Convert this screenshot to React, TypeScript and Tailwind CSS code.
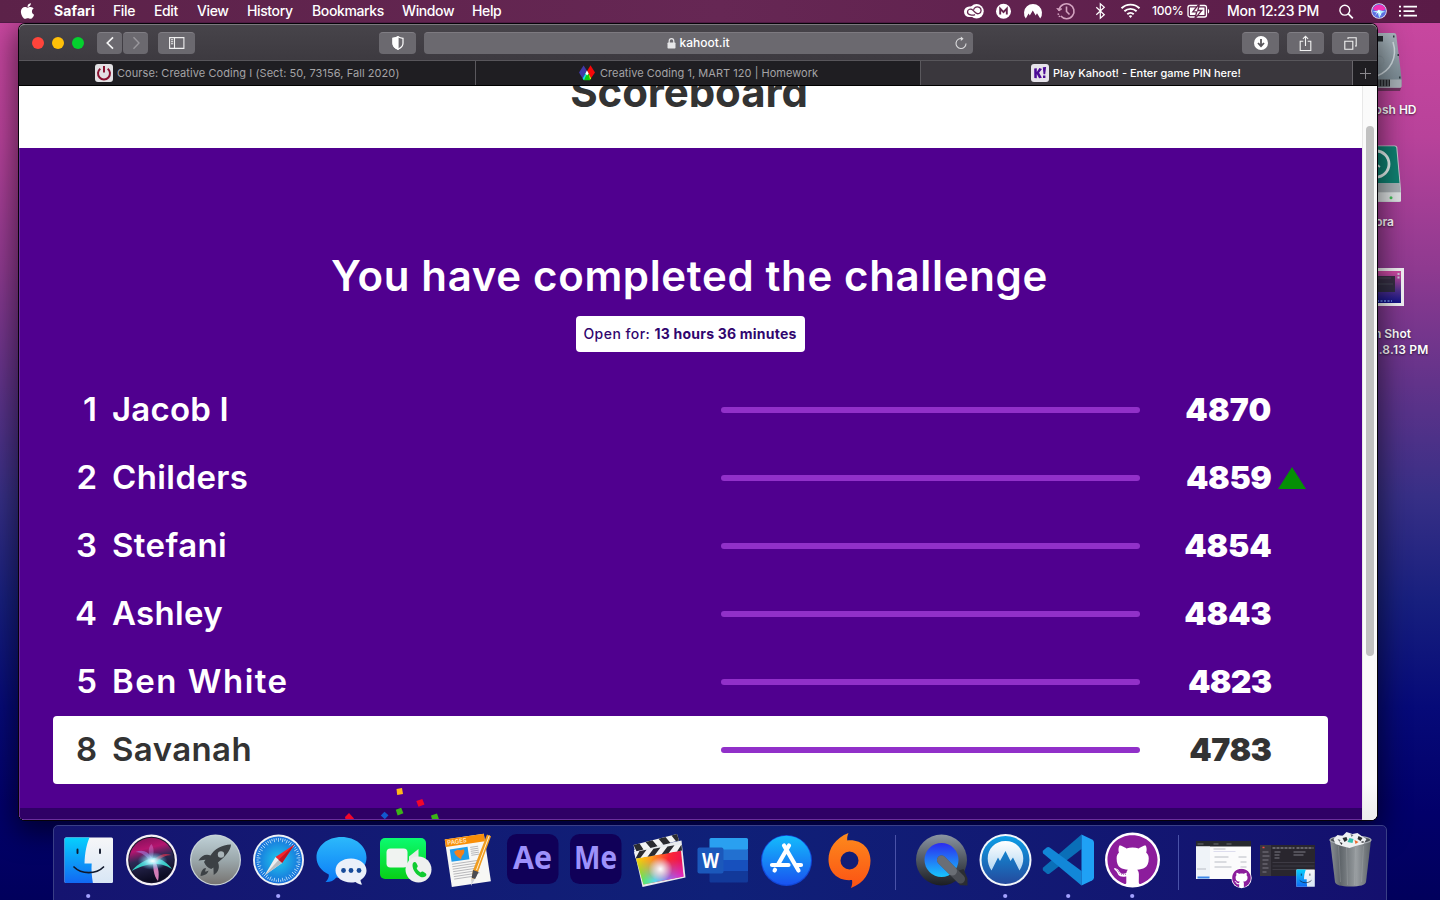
import React from 'react';
import { FaApple, FaGithub, FaBluetoothB } from 'react-icons/fa';

/* ---------- shared glyphs ---------- */

function SiriOrb({ r, id }: { r: number; id: string }) {
  return (
    <g transform={`scale(${r / 25})`}>
      <defs>
        <linearGradient id={`${id}-bg`} x1="0" y1="0" x2="0.25" y2="1">
          <stop offset="0" stopColor="#7a0f55" />
          <stop offset="0.32" stopColor="#b4156f" />
          <stop offset="0.55" stopColor="#2b2a55" />
          <stop offset="1" stopColor="#0c0b22" />
        </linearGradient>
        <radialGradient id={`${id}-glow`}>
          <stop offset="0" stopColor="#fff" />
          <stop offset="0.3" stopColor="#b8f4ff" stopOpacity="0.85" />
          <stop offset="1" stopColor="#4bb8e8" stopOpacity="0" />
        </radialGradient>
      </defs>
      <circle r="25.500" fill="#f4f0f6" />
      <circle r="23.300" fill="#15122b" />
      <circle r="22.300" fill={`url(#${id}-bg)`} />
      <path d="M-20 11C-13 3-5-1 3-2c8 1 13 5 17.500 11C14 5 9 4 4 4c-9 0-16 3-24 7z" fill="#38e0cf" opacity="0.9" />
      <path d="M2-2c4 7 6.500 14 4.500 23C2 16 1 6 2-2z" fill="#f58fd0" opacity="0.85" />
      <path d="M1-2c-5-7-10-9-17-6 6 0 11 4 14 9z" fill="#a77be0" opacity="0.6" />
      <path d="M1-2c2-7 1-11-1-14-4 4-3 9-1 15z" fill="#d79df0" opacity="0.35" />
      <path d="M3-1c6-5 11-6 17-4-6 0-11 3-15 7z" fill="#e0304f" opacity="0.7" />
      <ellipse cx="1" cy="1" rx="15" ry="9" fill={`url(#${id}-glow)`} />
    </g>
  );
}

function FinderFace({ id }: { id: string }) {
  return (
    <g>
      <defs>
        <linearGradient id={`${id}-l`} x1="0" y1="0" x2="0" y2="1">
          <stop offset="0" stopColor="#06d0fd" />
          <stop offset="1" stopColor="#1268f3" />
        </linearGradient>
        <linearGradient id={`${id}-r`} x1="0" y1="0" x2="0" y2="1">
          <stop offset="0" stopColor="#f6f6f8" />
          <stop offset="1" stopColor="#d8e6f5" />
        </linearGradient>
      </defs>
      <rect x="-24" y="-22.500" width="48.500" height="45.500" rx="1.500" fill={`url(#${id}-r)`} />
      <path d="M-22.500-22.500H1C-2-15-3.600-8-4 3.500H3.200c-.5 6 0 12.500 1.200 19.500h-26.900a1.500 1.500 0 0 1-1.500-1.500V-21a1.500 1.500 0 0 1 1.500-1.500z" fill={`url(#${id}-l)`} />
      <g stroke="#10182c" strokeLinecap="round" fill="none">
        <path d="M-11-10.500v3.500M11.500-10.500v3.500" strokeWidth="1.900" />
        <path d="M-14.500 7C-7 14.500 7.500 14.500 15 7" strokeWidth="1.700" />
      </g>
    </g>
  );
}

function GithubDisc({ r }: { r: number }) {
  return (
    <g>
      <circle r={r} fill="#fff" />
      <FaGithub x={-r * 0.94} y={-r * 0.93} size={r * 1.88} color="#8c1d9c" />
    </g>
  );
}

/* ---------- menu bar ---------- */

const menus: [string, string][] = [
  ['File', 'w-[41px]'],
  ['Edit', 'w-[43px]'],
  ['View', 'w-[50px]'],
  ['History', 'w-[65px]'],
  ['Bookmarks', 'w-[90px]'],
  ['Window', 'w-[70px]'],
  ['Help', 'w-[40px]'],
];

function StatusIcons() {
  return (
    <svg className="shrink-0" width="178" height="22" viewBox="963 0 178 22" fill="none">
      {/* creative cloud */}
      <rect x="964" y="6.500" width="17" height="10.500" rx="5.250" fill="#fff" />
      <circle cx="976.500" cy="11.300" r="7.200" fill="#fff" />
      <path d="M975 14.600c-2 1-7.500.8-7.500-2.600 0-3 3.600-3.700 5.300-1.900l2.800 2.700c1.800 1.800 5.500.8 5.500-2.200s-2.800-4.400-5.200-3.400c-1.400.6-2 1.600-2.400 2.600" stroke="#65264f" strokeWidth="1.300" />
      {/* m badge */}
      <circle cx="1003.500" cy="11.300" r="7.500" fill="#fff" />
      <path d="M1000.200 14.500V8.700l3.300 3.500 3.300-3.500v5.800" stroke="#65264f" strokeWidth="1.900" />
      {/* mountain */}
      <path d="M1025.800 18.400a9 9 0 1 1 14.400 0l-3.200-5.200-1.300 2.200-2.900-5-3 5-1.200-2z" fill="#fff" />
      {/* time machine */}
      <g stroke="#d3a3c0" strokeWidth="1.600">
        <path d="M1059.200 9.600a7.500 7.500 0 1 1 1.600 6.500" />
        <path d="M1066.500 6.500v5l3 3" />
        <path d="M1056.700 8l2.300 3 3-2.300" fill="#d3a3c0" strokeWidth="1" />
        <path d="M1058 13.500l1.700 3.500" strokeDasharray="1.500 1.200" />
      </g>
      {/* wifi */}
      <g stroke="#fff" strokeWidth="1.900">
        <path d="M1121.500 8.200a13 13 0 0 1 18 0" />
        <path d="M1124.400 11.300a8.800 8.800 0 0 1 12.200 0" />
        <path d="M1127.300 14.200a4.600 4.600 0 0 1 6.400 0" />
        <path d="M1130.500 18l-1.700-1.900a2.500 2.500 0 0 1 3.400 0z" fill="#fff" stroke="none" />
      </g>
      <path d="M1096.300 7.300l8 7.400-4 3.500V3.800l4 3.500-8 7.400" stroke="#fff" strokeWidth="1.200" />
    </svg>
  );
}

function MenuBar() {
  return (
    <header className="flex h-[23px] w-full shrink-0 items-center border-b border-[#4f1a44] bg-linear-to-r from-[#5c2249] via-[#662754] to-[#5a1b47] text-[14px] leading-[20px] font-medium text-white">
      <FaApple className="mb-[1px] ml-[20px] h-[18px] w-[15px] shrink-0" />
      <span className="mb-[1px] ml-[19px] w-[59px] shrink-0 font-bold tracking-[0.1px]">Safari</span>
      {menus.map(([label, width]) => (
        <span key={label} className={`mb-[1px] shrink-0 tracking-[-0.38px] ${width}`}>{label}</span>
      ))}
      <div className="ml-auto flex items-center">
        <StatusIcons />
        <span className="mb-[1px] ml-[11px] w-[35px] text-[12px] tracking-[-0.25px]">100%</span>
        <svg width="24" height="22" viewBox="0 0 24 22" fill="none">
          <rect x="1" y="5.500" width="18.500" height="11.500" rx="2" stroke="#fff" strokeWidth="1.300" />
          <path d="M21 9v4.500c1.600-.5 1.600-4 0-4.500z" fill="#fff" />
          <rect x="3" y="7.500" width="14.500" height="7.500" fill="#fff" />
          <path d="M12.500 3.500L5.800 11.800h4l-2 7 7-8.300h-4z" fill="#fff" stroke="#65264f" strokeWidth="1.300" />
        </svg>
        <span className="mb-[1px] ml-[16px] w-[96px] whitespace-nowrap tracking-[-0.25px]">Mon 12:23 PM</span>
        <svg className="ml-[13px] shrink-0" width="104" height="22" viewBox="1336 0 104 22" fill="none" stroke="#fff">
          <circle cx="1344.800" cy="10.200" r="4.900" strokeWidth="1.400" />
          <path d="M1348.400 13.800l4.400 4.500" strokeWidth="1.700" />
          <circle cx="1379" cy="11" r="7.800" fill="#ece8f6" stroke="none" />
          <circle cx="1379" cy="11" r="7" fill="#5d6fe0" stroke="none" />
          <path d="M1373 8.500a7 7 0 0 1 12.500 0c-2 3-4 2-6 2s-4 1.500-6.500-2z" fill="#f032b4" stroke="none" />
          <path d="M1372.300 12c2-1 4-.5 6.700-2.200 2.500 1.500 5 1.200 6.800 2.200-1.500 0-3 .3-4 1l-2.500 5-1.500-5c-1.500-1-3.500-1-5.500-1z" fill="#aef0ff" stroke="none" />
          <path d="M1379 9.500l2.400 6.500-3-4-4 4.500z" fill="#fff" stroke="none" />
          <path d="M1403.500 6.700h13.500M1403.500 11.200h11M1403.500 15.600h13.500" strokeWidth="1.800" />
          <path d="M1399 6.700h2M1399 11.200h2M1399 15.600h2" strokeWidth="1.800" />
        </svg>
      </div>
    </header>
  );
}

/* ---------- desktop icons ---------- */

function DesktopIcons() {
  return (
    <div className="absolute top-0 right-0 h-[360px] w-[90px] text-right text-[12px] leading-[16px] font-semibold text-white [text-shadow:0_1px_2px_rgba(0,0,0,0.6)]">
      <svg className="absolute top-0 left-0" width="90" height="300" viewBox="1350 23 90 300" fill="none">
        <defs>
          <linearGradient id="hd" x1="0" y1="0" x2="0.3" y2="1">
            <stop offset="0" stopColor="#b9c6cd" />
            <stop offset="1" stopColor="#7d8d96" />
          </linearGradient>
          <linearGradient id="shot" x1="0.1" y1="0" x2="0" y2="1">
            <stop offset="0" stopColor="#c9489f" />
            <stop offset="0.5" stopColor="#53318c" />
            <stop offset="1" stopColor="#050b88" />
          </linearGradient>
        </defs>
        <path d="M1352 88h49l-1 3h-48z" fill="#222" opacity="0.5" />
        <path d="M1352 33h42q2 0 2.300 2l5.200 43v8l-1.500 1.500H1352z" fill="url(#hd)" />
        <path d="M1352 79.500h49.500v7l-1 1.200h-48.500z" fill="#a7b1b6" />
        <path d="M1376 79.500h14v7h-14z" fill="#24262a" />
        <path d="M1379 79.500v7M1382 79.500v7M1385 79.500v7M1388 79.500v7" stroke="#7e878c" />
        <path d="M1376 36h7v5.500h-7z" fill="#222a2e" />
        <path d="M1393 42c5 16-3 29-16 34" stroke="#d4dee3" strokeWidth="1.500" />
        <circle cx="1379" cy="61" r="5" stroke="#8d9ca4" />
        <path d="M1393 36.500h1.500M1397.500 55h1.500M1399 77.500h1.500" stroke="#2f3a42" strokeWidth="1.800" />

        <path d="M1352 145.500h43q2 0 2.300 2l3.700 42v11l-1.500 1.500H1352z" fill="#c5ccce" />
        <path d="M1352 146.300h42.500q1.600 0 1.800 1.500l3.200 35.500H1352z" fill="#0f7f70" />
        <path d="M1352 183.300h47.500l1 9H1352z" fill="#a9b0b4" />
        <path d="M1352 192.500h49v9h-49z" fill="#dfe3e4" />
        <circle cx="1391" cy="197.800" r="1.500" fill="#43c05a" />
        <circle cx="1376" cy="164" r="13" stroke="#e6f1ef" strokeWidth="2.800" />
        <path d="M1376 164l4 3" stroke="#e6f1ef" strokeWidth="1.700" />

        <rect x="1350" y="268" width="54" height="38" fill="#f1f1f3" />
        <rect x="1353" y="271" width="48" height="32" fill="url(#shot)" />
        <path d="M1353 276h42v16h-42z" fill="#2c2c3a" opacity="0.9" />
        <path d="M1378 278h13M1378 284h15" stroke="#474956" />
        <path d="M1377 301h15" stroke="#6e90e8" strokeDasharray="2 1.500" strokeWidth="1.500" />
        <path d="M1398.500 273v6" stroke="#c9c3d8" strokeDasharray="2 1.500" strokeWidth="2" />
      </svg>
      <span className="absolute top-[79px] right-[23.500px] whitespace-nowrap">osh HD</span>
      <span className="absolute top-[191px] right-[46px]">ora</span>
      <span className="absolute top-[303px] right-[29px] whitespace-nowrap">n Shot</span>
      <span className="absolute top-[319px] right-[11.500px] whitespace-nowrap tracking-[0.200px]">.8.13 PM</span>
    </div>
  );
}

/* ---------- safari window ---------- */

const button = 'flex h-[22px] items-center justify-center rounded-[4px] border-t border-[#807e84] bg-[#6b696f] shrink-0';

function Toolbar() {
  return (
    <div className="flex h-[36px] shrink-0 items-center rounded-t-[6px] border-t border-[#7b787d] bg-linear-to-b from-[#47444a] to-[#3d3a40] pl-[13px]">
      <span className="h-[12px] w-[12px] rounded-full bg-[#ff443b]" />
      <span className="ml-[8px] h-[12px] w-[12px] rounded-full bg-[#ffc008]" />
      <span className="ml-[8px] h-[12px] w-[12px] rounded-full bg-[#04d12e]" />
      <span className={`${button} ml-[13px] w-[25px]`}>
        <svg width="10" height="14" viewBox="0 0 10 14" fill="none" stroke="#f4f4f4" strokeWidth="1.700"><path d="M8 1.300L2.300 7 8 12.700" /></svg>
      </span>
      <span className={`${button} ml-[1px] w-[25px]`}>
        <svg width="10" height="14" viewBox="0 0 10 14" fill="none" stroke="#9a989d" strokeWidth="1.400"><path d="M2.500 1.300L8 7l-5.500 5.700" /></svg>
      </span>
      <span className={`${button} ml-[10px] w-[37px]`}>
        <svg width="16" height="12" viewBox="0 0 16 12" fill="none" stroke="#f0f0f0"><path d="M.6.600h14.300v10.800H.6zM5.500.500v11M2 2.700h2.200M2 4.700h2.200M2 6.700h2.200" strokeWidth="1.100" /></svg>
      </span>
      <span className={`${button} ml-[184px] w-[37px]`}>
        <svg width="14" height="14" viewBox="0 0 14 14" fill="none" stroke="#fff" strokeWidth="1.200"><path d="M7 .8c1.600 1 3.300 1.400 5 1.500v5c0 2.900-2.200 4.800-5 6-2.800-1.200-5-3.100-5-6v-5C3.700 2.200 5.400 1.800 7 .8z" /><path d="M7 .8v12.500c-2.800-1.200-5-3.100-5-6v-5C3.700 2.200 5.400 1.800 7 .8z" fill="#fff" /></svg>
      </span>
      <div className="ml-[8px] flex h-[22px] w-[549px] shrink-0 items-center rounded-[4px] border-t border-[#7d7a80] bg-[#6b696f] text-[12px] font-medium text-white">
        <svg className="ml-[242.500px]" width="9" height="11" viewBox="0 0 9 11"><rect x="0.500" y="4.500" width="8" height="6" rx="0.800" fill="#e6e6e8" /><path d="M2.200 5V3a2.300 2.300 0 0 1 4.600 0v2" fill="none" stroke="#e6e6e8" strokeWidth="1.200" /></svg>
        <span className="ml-[4px]">kahoot.it</span>
        <svg className="mr-[5px] ml-auto" width="14" height="14" viewBox="0 0 14 14" fill="none" stroke="#dcdcde" strokeWidth="1.100"><path d="M8 2.600a5 5 0 1 0 4 4.900" /><path d="M6.800.4L9.600 2.700 6.800 5z" fill="#dcdcde" stroke="none" /></svg>
      </div>
      <span className={`${button} ml-[269px] w-[37px]`}>
        <svg width="14" height="14" viewBox="0 0 14 14"><circle cx="7" cy="7" r="7" fill="#fff" /><path d="M7 3v7M4 7l3 3.200L10 7" fill="none" stroke="#57555a" strokeWidth="1.800" /></svg>
      </span>
      <span className={`${button} ml-[8px] w-[37px]`}>
        <svg width="13" height="17" viewBox="0 0 13 17" fill="none" stroke="#f2f2f2" strokeWidth="1.100"><path d="M4.300 6.200H1.200v9.300h10.600V6.200H8.700M6.500 11V1.300M3.900 3.800l2.600-2.600 2.600 2.600" /></svg>
      </span>
      <span className={`${button} ml-[8px] w-[37px]`}>
        <svg width="13" height="13" viewBox="0 0 13 13" fill="none" stroke="#f2f2f2" strokeWidth="1.100"><path d="M.8 4.200h8v8h-8zM4 2V.8h8.200v8.200H11" /></svg>
      </span>
    </div>
  );
}

function TabBar() {
  return (
    <div className="flex h-[26px] shrink-0 border-t border-b border-t-[#58565b] border-b-black bg-[#1f1e22] text-[11px] text-[#a4a3a6]">
      <div className="flex w-[457px] items-center border-r border-[#5a585d] pl-[76px] whitespace-nowrap">
        <svg className="shrink-0" width="18" height="18" viewBox="0 0 18 18" fill="none"><rect width="18" height="18" rx="3" fill="#e2e0e3" /><path d="M5.300 4.700a6 6 0 1 0 7.400 0" stroke="#8a1230" strokeWidth="2" /><path d="M9 2v6.500" stroke="#8a1230" strokeWidth="2" /></svg>
        <span className="ml-[4px] tracking-[0.070px]">Course: Creative Coding I (Sect: 50, 73156, Fall 2020)</span>
      </div>
      <div className="flex w-[445px] items-center border-r border-[#5a585d] pl-[103px] whitespace-nowrap">
        <svg className="shrink-0" width="16" height="16" viewBox="0 0 16 16"><path d="M4.600.500L9 7.500 4.600 15 0 7.500z" fill="#4038a8" /><path d="M11.500.300L16 7.500 11.500 14 7.300 7.500z" fill="#f80808" /><path d="M8 6l4.200 7.500L11 15.300H5L3.700 13.500z" fill="#10c810" /><path d="M6 9.500L8 6l-.4 3.200L5 15.200l-1.300-1.700z" fill="#18d8f0" /><path d="M9.800 9.300L12.200 13.500l-1.200.8z" fill="#f5e80c" /><path d="M8 5.500l1.700 3-1.700 2-1.600-2z" fill="#fff" /></svg>
        <span className="ml-[5px] tracking-[0.040px]">Creative Coding 1, MART 120 | Homework</span>
      </div>
      <div className="flex w-[432px] items-center border-r border-[#68666b] bg-[#3a373d] pl-[110px] font-medium whitespace-nowrap text-white">
        <svg className="shrink-0" width="18" height="18" viewBox="0 0 18 18"><rect width="18" height="18" rx="3" fill="#e6e3ea" /><path d="M3.200 4.500l2.600-.3v3.900l2.600-4 2.600.8-2.900 3.900 2.800 4.900-2.800.5L5.800 10v4.300l-2.500-.2zM11.800 3.300l3.300-.4-.9 7.300h-1.700zM12 11.600h2.400V14H12z" fill="#4b0a96" /></svg>
        <span className="ml-[4px]">Play Kahoot! - Enter game PIN here!</span>
      </div>
      <div className="flex flex-1 items-center justify-center">
        <svg width="12" height="12" viewBox="0 0 12 12" stroke="#8b898e" strokeWidth="1"><path d="M6.500 1v11M1 6.500h11" /></svg>
      </div>
    </div>
  );
}

type Row = { rank: number; name: string; nameClass: string; score: number; scoreClass: string; up?: boolean; me?: boolean };

const rows: Row[] = [
  { rank: 1, name: 'Jacob I', nameClass: 'tracking-[0.2px]', score: 4870, scoreClass: 'tracking-[0.200px]' },
  { rank: 2, name: 'Childers', nameClass: 'tracking-[0.4px]', score: 4859, scoreClass: 'tracking-[-0.400px]', up: true },
  { rank: 3, name: 'Stefani', nameClass: 'tracking-[0.4px]', score: 4854, scoreClass: 'tracking-[-0.200px]' },
  { rank: 4, name: 'Ashley', nameClass: 'tracking-[0.3px]', score: 4843, scoreClass: 'tracking-[-0.200px]' },
  { rank: 5, name: 'Ben White', nameClass: 'tracking-[1.500px]', score: 4823, scoreClass: 'tracking-[-0.700px]' },
  { rank: 8, name: 'Savanah', nameClass: 'tracking-[0.400px]', score: 4783, scoreClass: 'tracking-[-0.500px]', me: true },
];

function ScoreRow({ row }: { row: Row }) {
  return (
    <li className={`flex h-[68px] items-center rounded-[4px] ${row.me ? 'bg-white text-[#333333]' : 'text-white'}`}>
      <span className="w-[44.500px] text-right text-[33px] font-semibold">{row.rank}</span>
      <span className={`ml-[15px] w-[608.500px] text-[33px] font-semibold ${row.nameClass}`}>{row.name}</span>
      <span className="h-[6px] w-[419px] rounded-[3px] bg-[#9130c9]" />
      <span className={`w-[132px] text-right text-[32px] font-black ${row.scoreClass}`}>{row.score}</span>
      {row.up && (
        <svg className="ml-[6px]" width="28" height="22" viewBox="0 0 28 22"><path d="M14 0l14 22H0z" fill="#058f05" /></svg>
      )}
    </li>
  );
}

function Page() {
  return (
    <div className="flex h-[734px] shrink-0 overflow-hidden rounded-b-[6px] bg-white">
      <main className="flex w-[1343px] shrink-0 flex-col">
        <div className="flex h-[62px] shrink-0 items-end justify-center overflow-hidden bg-white pr-[3px] pb-[26px]">
          <h1 className="text-[42px] leading-[60px] font-bold tracking-[-0.100px] text-[#333333]">Scoreboard</h1>
        </div>
        <section className="relative flex grow flex-col items-center border-b border-l border-[#6a2f9c] bg-[#50008f] pt-[98px]">
          <h2 className="mr-[3px] h-[59px] text-[42px] leading-[60px] font-semibold tracking-[0.650px] whitespace-nowrap text-white">You have completed the challenge</h2>
          <div className="mt-[11px] mr-[2px] flex h-[36px] w-[229px] items-center justify-center rounded-[4px] bg-white pb-[1px] text-[14px] whitespace-nowrap text-[#31056e]">
            <span className="font-medium tracking-[0.450px]">Open for:&nbsp;</span>
            <span className="font-bold tracking-[0.220px]">13 hours 36 minutes</span>
          </div>
          <ul className="mt-[24px] mr-[2px] w-[1275px]">
            {rows.map((r) => <ScoreRow key={r.rank} row={r} />)}
          </ul>
          <div className="mt-[24px] h-[11px] w-full bg-[#2f0066]" />
          <svg className="absolute bottom-0 left-[320px]" width="110" height="34" viewBox="340.500 785.500 110 34">
            <path d="M397 789.500l5.500-1 1 6-5.800 1z" fill="#ffb81a" />
            <path d="M416.800 801.500l6-2 2.200 5.500-6 2.200z" fill="#f2062b" />
            <path d="M396.300 810.300l5.400-2 2.200 5.500-5.800 2.200z" fill="#3cb418" />
            <path d="M385 812.200l4 3.500-3.700 4-4-3.700z" fill="#1258cf" />
            <path d="M349.500 813.500l5 5.500-1 1h-7.500l-.5-2.500z" fill="#f2062b" />
            <path d="M431.500 816l6-2 2 5.800h-7z" fill="#3cb418" />
          </svg>
        </section>
      </main>
      <aside className="flex w-[15px] shrink-0 justify-center border-l border-[#e8e8e8] bg-linear-to-b from-[#fafafa] from-95% to-[#ececec] pt-[40px]">
        <span className="h-[530px] w-[8px] rounded-full bg-[#c1c1c1]" />
      </aside>
    </div>
  );
}

/* ---------- dock ---------- */

function DockItem({ children, running }: { children: React.ReactNode; running?: boolean }) {
  return (
    <div className="flex h-[74px] w-[63.450px] shrink-0 justify-center">
      <svg className="shrink-0 overflow-visible" width="63" height="74" viewBox="-31.500 -34 63 74">
        {children}
        {running && <circle cx="-0.300" cy="36" r="2.100" fill="#a3a2ff" />}
      </svg>
    </div>
  );
}

function DockDivider() {
  return <div className="mx-[14px] mt-[9px] h-[55px] w-px shrink-0 bg-[#4a52a8]" />;
}

const safariTicks = Array.from({ length: 60 }, (_, i) => i * 6);

function Dock() {
  return (
    <footer className="absolute top-[802px] left-[53px] flex h-[76px] w-[1334px] rounded-t-[5px] border border-[#3a3f86] bg-linear-to-r from-[#151470] via-[#0f2078] to-[#14106e] pl-[2.500px]">
      <DockItem running><FinderFace id="finder" /></DockItem>
      <DockItem><SiriOrb r={25} id="siri" /></DockItem>
      <DockItem>
        <defs><linearGradient id="pad" x1="0" y1="0" x2="0" y2="1"><stop offset="0" stopColor="#bfd0d6" /><stop offset="0.5" stopColor="#9ba8ac" /><stop offset="1" stopColor="#777471" /></linearGradient></defs>
        <circle r="25.500" fill="#c9d3d8" /><circle r="24.300" fill="url(#pad)" />
        <path d="M15.500-15.500C6-15-1-11-5-4.500c-4-1.800-9-.5-12 5l7-.8-1.500 2.200c1.500 3.500 4 6 7.200 7l2.200-1.500.3 7.500c5-3 6.300-8 4.300-12.500C9.500-3 15-9 15.500-15.500z" fill="#3c4145" />
        <circle cx="5.500" cy="-5.500" r="3.200" fill="#a9b5b9" />
        <path d="M-9.500 8c-3 0-5 3-5.500 8 4.500-.5 7.500-2.500 8-5.500-1 .7-2 1-3.500 1z" fill="#3c4145" />
      </DockItem>
      <DockItem running>
        <defs><radialGradient id="saf"><stop offset="0" stopColor="#20c9ec" /><stop offset="1" stopColor="#176fdb" /></radialGradient></defs>
        <circle r="25.500" fill="#eef1f5" /><circle r="23.600" fill="url(#saf)" />
        {safariTicks.map((a, i) => <path key={a} d={i % 2 ? 'M0-22v2.200' : 'M0-22v3.800'} transform={`rotate(${a})`} stroke="#d7f2fc" strokeWidth="0.700" />)}
        <path d="M16-15.500L3.500 3-3-3z" fill="#f5252d" /><path d="M-14 15.500L-3-3 3.500 3z" fill="#eceeef" /><path d="M16-15.500L3.500 3 0 0z" fill="#c01522" /><path d="M-14 15.500L3.500 3 0 0z" fill="#b9bec2" />
      </DockItem>
      <DockItem>
        <defs><linearGradient id="msg" x1="0" y1="0" x2="0" y2="1"><stop offset="0" stopColor="#2cb9fb" /><stop offset="1" stopColor="#0b7cf7" /></linearGradient></defs>
        <path d="M0-23c14 0 25 9 25 20.500S14 18 0 18c-2 0-3.500-.1-5.200-.5C-8 21-12 22.500-16 22c2.500-2.500 3.600-5 3.300-7.500C-20 11-25 5-25-2.500-25-14-14-23 0-23z" fill="url(#msg)" />
        <path d="M9.500-1.500C18-1.500 25 3.500 25 10.500c0 4-2.500 7.500-6 9.500.1 1.700.7 3 1.700 4.500-2.700-.1-5-1-6.700-2.600-1.500.4-3 .5-4.500.5-8.500 0-15.500-5-15.500-12s7-11.900 15.500-11.900z" fill="#eaf0fa" />
        <g fill="#164b9a"><circle cx="2" cy="10.500" r="2.400" /><circle cx="9.500" cy="10.500" r="2.400" /><circle cx="17.500" cy="10.500" r="2.400" /></g>
      </DockItem>
      <DockItem>
        <defs><linearGradient id="ft" x1="0" y1="0" x2="0" y2="1"><stop offset="0" stopColor="#0bfb70" /><stop offset="1" stopColor="#08cf17" /></linearGradient></defs>
        <rect x="-25.500" y="-22" width="46" height="41" rx="5" fill="url(#ft)" />
        <rect x="-19" y="-11.500" width="21" height="19" rx="4" fill="#f0f3f1" /><path d="M3.500-3.500l9.500-7.500V7L3.500 1z" fill="#e7ece8" />
        <circle cx="13" cy="9.500" r="13" fill="#eef0ef" />
        <path d="M7.500 3c1-1.500 2.500-1.500 3.300 0l1.300 2.500c.4 1-.1 1.900-1 2.600.8 2 2 3.300 4 4.400.8-.9 1.800-1.200 2.700-.7l2.300 1.500c1.200.9 1 2.400-.3 3.300-2.200 1.500-5 .6-8-1.900C8.200 11.600 6 6.200 7.500 3z" fill="#10cc30" />
      </DockItem>
      <DockItem>
        <g transform="translate(-1.500 0) rotate(-8.500)">
          <rect x="-19" y="-23.500" width="39.500" height="48" fill="#f7f7f5" />
          <rect x="-19" y="-23.500" width="39.500" height="7.500" fill="#f98f08" />
          <text x="-17" y="-17.600" fontSize="6" fontWeight="600" fill="#ffe9c8">PAGES</text>
          <rect x="-15.500" y="-13" width="18" height="12.500" fill="#1e9ceb" />
          <path d="M-11.500-10l3.500-1.500 3 1 3.500-.7c1 4-2 5.500-3 6.500L-6-1.500c-2-2.500-5-4-5.500-8.500z" fill="#f3801a" />
          <path d="M5-12h8M5-10h8M5-8h8M5-6h8M5-4h8M-15.500 2h28M-15.500 4.500h28M-15.500 7h26M-15.500 9.500h27M-15.500 12h25M-15.500 14.500h26M-15.500 17h23" stroke="#b5b5b8" strokeWidth="0.900" />
        </g>
        <path d="M18.500-25.500l4 1.800L9.500 12l-5 9-1.500-.6 1.400-10z" fill="#ef9c21" /><path d="M20.800-24.500L8 10" stroke="#fff0cf" strokeWidth="1" /><path d="M4.600 10l5.500 2-3.500 7-3.500-1.300z" fill="#4a4c52" /><path d="M3.200 18l3 1.200L2.500 26z" fill="#cfd2d8" />
      </DockItem>
      <DockItem>
        <rect x="-25.500" y="-26" width="51.500" height="50" rx="9.500" fill="#100058" />
        <text x="0" y="9" fontSize="32.500" fontWeight="700" fill="#9d91fb" textAnchor="middle" textLength="39" lengthAdjust="spacingAndGlyphs" className="font-['Open_Sans']">Ae</text>
      </DockItem>
      <DockItem>
        <rect x="-25.500" y="-26" width="51.500" height="50" rx="9.500" fill="#100058" />
        <text x="0" y="9" fontSize="32.500" fontWeight="700" fill="#9d91fb" textAnchor="middle" textLength="43" lengthAdjust="spacingAndGlyphs" className="font-['Open_Sans']">Me</text>
      </DockItem>
      <DockItem>
        <defs>
          <linearGradient id="fcp" x1="0" y1="0" x2="1" y2="0.2"><stop offset="0" stopColor="#f5e10a" /><stop offset="0.35" stopColor="#ff9b1e" /><stop offset="0.7" stopColor="#fb2734" /><stop offset="1" stopColor="#ee1150" /></linearGradient>
          <linearGradient id="fcp2" x1="0" y1="0" x2="1" y2="0"><stop offset="0" stopColor="#5cf01b" /><stop offset="0.4" stopColor="#58d9f0" /><stop offset="0.7" stopColor="#9170f5" /><stop offset="1" stopColor="#e32be0" /></linearGradient>
          <linearGradient id="fade" x1="0" y1="0" x2="0" y2="1"><stop offset="0.200" stopColor="#000" /><stop offset="0.800" stopColor="#fff" /></linearGradient>
          <radialGradient id="fcpw"><stop offset="0" stopColor="#fff" /><stop offset="1" stopColor="#fff" stopOpacity="0" /></radialGradient>
          <mask id="fcpm"><rect x="-24" y="-8" width="49" height="36" fill="url(#fade)" /></mask>
        </defs>
        <path d="M-25.500-10L22-19.500l4 37-43 9.500z" fill="#e8ebee" />
        <path d="M-23.500-1.500L21.500-9.500l2.500 26-40 8z" fill="url(#fcp)" /><path d="M-23.500-1.500L21.500-9.500l2.500 26-40 8z" fill="url(#fcp2)" mask="url(#fcpm)" />
        <circle cx="1" cy="9" r="12" fill="url(#fcpw)" />
        <path d="M-26-15L17.500-26l2 6.500L-24.500-8.500z" fill="#f2f3f4" />
        <path d="M-26-15l6-1.500 4 6-7 1.700zM-14-18l7-1.800 5 6.100-7 1.700zM-1-21.300l7-1.700 5 6-7 1.700zM12-24.600l5.500-1.400 2 6.500-3 .8z" fill="#2a2b30" />
        <path d="M-25.500-8L22-15.500l.5 6L-24-1.500z" fill="#f2f3f4" />
        <path d="M-20-9l7-1.200-6 8-5 .8zM-6-11.300l7-1.200-6 8-7 1.200zM8-13.600l7-1.200-6 8-7 1.200zM22-15.500l.5 6-5 1z" fill="#2a2b30" />
      </DockItem>
      <DockItem>
        <rect x="-13" y="-22" width="38.500" height="12" rx="1.500" fill="#2aa0f0" /><rect x="-13" y="-10.500" width="38.500" height="11" fill="#2270d0" /><rect x="-13" y="0" width="38.500" height="11.500" fill="#1750bd" /><rect x="-13" y="11" width="38.500" height="11.500" rx="1.500" fill="#12399a" />
        <rect x="-25" y="-12.500" width="26" height="26" rx="2" fill="#1b58bb" />
        <text x="-12" y="7.500" fontSize="21" fontWeight="700" fill="#fff" textAnchor="middle" textLength="17" lengthAdjust="spacingAndGlyphs" className="font-['Open_Sans']">W</text>
      </DockItem>
      <DockItem>
        <defs><linearGradient id="as" x1="0" y1="0" x2="0" y2="1"><stop offset="0" stopColor="#14bcfc" /><stop offset="1" stopColor="#1953f0" /></linearGradient></defs>
        <circle cy="0.500" r="25.500" fill="#1247d8" /><circle cy="0.200" r="24.500" fill="url(#as)" />
        <g stroke="#fff" strokeWidth="4.200" strokeLinecap="round"><path d="M2.500-14.500L-8.500 4.500M-11.500 9.800l-.4.700M-2.500-14.500L12 10.500M-14.500 5H2M10.500 5h4" /></g>
      </DockItem>
      <DockItem>
        <defs><linearGradient id="or" x1="0" y1="0" x2="0" y2="1"><stop offset="0" stopColor="#fd8a1c" /><stop offset="1" stopColor="#fb5214" /></linearGradient></defs>
        <path fillRule="evenodd" d="M-1-27c-1.300 3-1.500 5-1.200 7.500C12-21 21-11.500 21 .5 21 12 15 23 1.500 28c1.200-3 1.500-5.500 1-8C-11 21.500-21 12.500-21-.500-21-11.500-14-22-1-27zM0-8.500a9 9 0 1 0 0 18 9 9 0 0 0 0-18z" fill="url(#or)" />
      </DockItem>
      <DockDivider />
      <DockItem>
        <defs><linearGradient id="qt" x1="0" y1="0" x2="0" y2="1"><stop offset="0" stopColor="#8b95a3" /><stop offset="0.5" stopColor="#505761" /><stop offset="1" stopColor="#1b1d22" /></linearGradient><linearGradient id="qtb" x1="0" y1="0" x2="0" y2="1"><stop offset="0" stopColor="#2b2bf0" /><stop offset="1" stopColor="#18c5fc" /></linearGradient></defs>
        <circle r="25.500" fill="url(#qt)" /><circle r="17" fill="url(#qtb)" />
        <path d="M10 13L22 9l4 9.500v7l-7.500-.2z" fill="#2b2d32" />
        <path d="M0 0L19 19" stroke="#4a4d54" strokeWidth="9" strokeLinecap="round" />
        <path d="M0 0L11 11" stroke="#6a6e75" strokeWidth="9" strokeLinecap="round" />
      </DockItem>
      <DockItem running>
        <defs><linearGradient id="nv" x1="0" y1="0" x2="0" y2="1"><stop offset="0" stopColor="#0d9ee6" /><stop offset="1" stopColor="#244a9d" /></linearGradient><linearGradient id="nw" x1="0" y1="0" x2="0" y2="1"><stop offset="0" stopColor="#fff" /><stop offset="1" stopColor="#b5d8f2" /></linearGradient></defs>
        <circle r="26" fill="#f3f7fb" /><circle r="24" fill="url(#nv)" />
        <path d="M-14 10.500C-23-3-15-19 0-19S23-3 14 10.500L7.500-2.500 5 1 0-9-5.500 1-7.500-2.500z" fill="url(#nw)" />
      </DockItem>
      <DockItem running>
        <path d="M13-25.500L-25.300 7.500q-1.200 1.500 0 3l3.500 3q1.500 1 3 0L13-11z" fill="#0a6fb8" />
        <path d="M13 25.500L-25.300-6.500q-1.200-1.500 0-3l3.500-3q1.500-1 3 0L13 11z" fill="#1287d8" />
        <path d="M13-25.500L23.500-20.500q2 1 2 3v35q0 2-2 3L13 25.500z" fill="#1fa1f5" />
      </DockItem>
      <DockItem running><GithubDisc r={27.500} /></DockItem>
      <DockDivider />
      <DockItem>
        <g transform="translate(-1 0)">
          <rect x="-27.500" y="-19" width="55" height="38" fill="#fbfbfc" /><rect x="-27.500" y="-19" width="55" height="5.500" fill="#26282d" />
          <path d="M-27.500-13.500h14v32h-14z" fill="#eff3f8" /><path d="M-26 17.500h12" stroke="#3b86e8" strokeWidth="2" /><path d="M-26.500 9h9M-10-11h12M-9-3h14M-9 2h12M-9 7h17M15-3h8M17 2h6M17 7h6" stroke="#b9bcc4" strokeWidth="1" /><path d="M-10-8.500h22" stroke="#dde" strokeWidth="1" />
          <path d="M-26-16h6M-10-16h5M3-16h5" stroke="#6b6d72" strokeWidth="1" />
          <g transform="translate(18 18)"><GithubDisc r={10.2} /></g>
        </g>
      </DockItem>
      <DockItem>
        <g transform="translate(-1 0)">
          <rect x="-27.500" y="-15" width="55" height="31" fill="#29262e" /><path d="M-27.500-15h11v31h-11z" fill="#3a3740" />
          <path d="M-15-12h22M9-12h17" stroke="#a2a1a7" strokeWidth="1.200" strokeDasharray="3 1" /><path d="M-25-8h6M-25-4h7M-25 0h6M-25 4h5M-25 8h6M-25 12h4M-13-8h6M-13-5h5M-13-2h5M6-8h12M6-5h10" stroke="#7d7b84" strokeWidth="1" /><path d="M-15 2.500h42M-15 6h42M-15 9.500h42" stroke="#3d3a44" strokeWidth="1" />
          <path d="M-25-12.500h2" stroke="#f04a42" strokeWidth="1.500" />
          <g transform="translate(18 18) scale(0.38)"><FinderFace id="finder-mini" /></g>
        </g>
      </DockItem>
      <DockItem>
        <defs><linearGradient id="bin" x1="0" y1="0" x2="1" y2="0"><stop offset="0" stopColor="#8a8f96" /><stop offset="0.25" stopColor="#5f656a" /><stop offset="0.65" stopColor="#989da0" /><stop offset="1" stopColor="#5b6167" /></linearGradient></defs>
        <g transform="translate(-1 0)">
          <path d="M-20.500-20l5 42q1 4.500 15.500 4.500T15.500 22l5-42z" fill="url(#bin)" />
          <path d="M-12-14l2 36M-4-13l1 38M5-13L4 25M13-14l-2 36" stroke="#b9bdc0" strokeWidth="1" opacity="0.25" />
          <ellipse cy="-20" rx="20.500" ry="4" fill="#4c5157" stroke="#a6abb1" strokeWidth="1.300" />
          <path d="M-17-21l4-4 5 1 4-4 6 2 5-1 4 3 5 3-3 5-8 2-6 2-8-2-6-2z" fill="#eef0f2" />
          <path d="M-8-22l4-1 1 3-3 2zM8-24l4 2-2 3-3-2zM-11-18l3 1-1 2zM10-18l3-1v2z" fill="#2c2e33" /><path d="M-1-22l4 1-1 4-5-1z" fill="#2fbfae" /><path d="M4-20l4 2-3 2z" fill="#ee6a2d" /><path d="M-13-21l3 1-1 2zM0-26l3 1-2 2z" fill="#6d7379" />
        </g>
      </DockItem>
    </footer>
  );
}

export default function App() {
  return (
    <div className="flex h-[900px] w-[1440px] flex-col overflow-hidden font-['Inter',sans-serif]">
      <MenuBar />
      <div className="relative h-[877px] w-full overflow-hidden bg-[linear-gradient(180deg,#c8479f_0%,#b8429a_13%,#8f3a90_28%,#62338a_41%,#372f86_54%,#171f7e_66%,#060a78_78%,#02006a_90%,#01005c_100%)]">
        <DesktopIcons />
        <div className="absolute top-[1px] left-[19px] flex h-[796px] w-[1358px] flex-col rounded-[6px] bg-white shadow-[0_0_0_1px_#060308,0_8px_28px_4px_rgba(0,0,0,0.55)]">
          <Toolbar />
          <TabBar />
          <Page />
        </div>
        <Dock />
      </div>
    </div>
  );
}
